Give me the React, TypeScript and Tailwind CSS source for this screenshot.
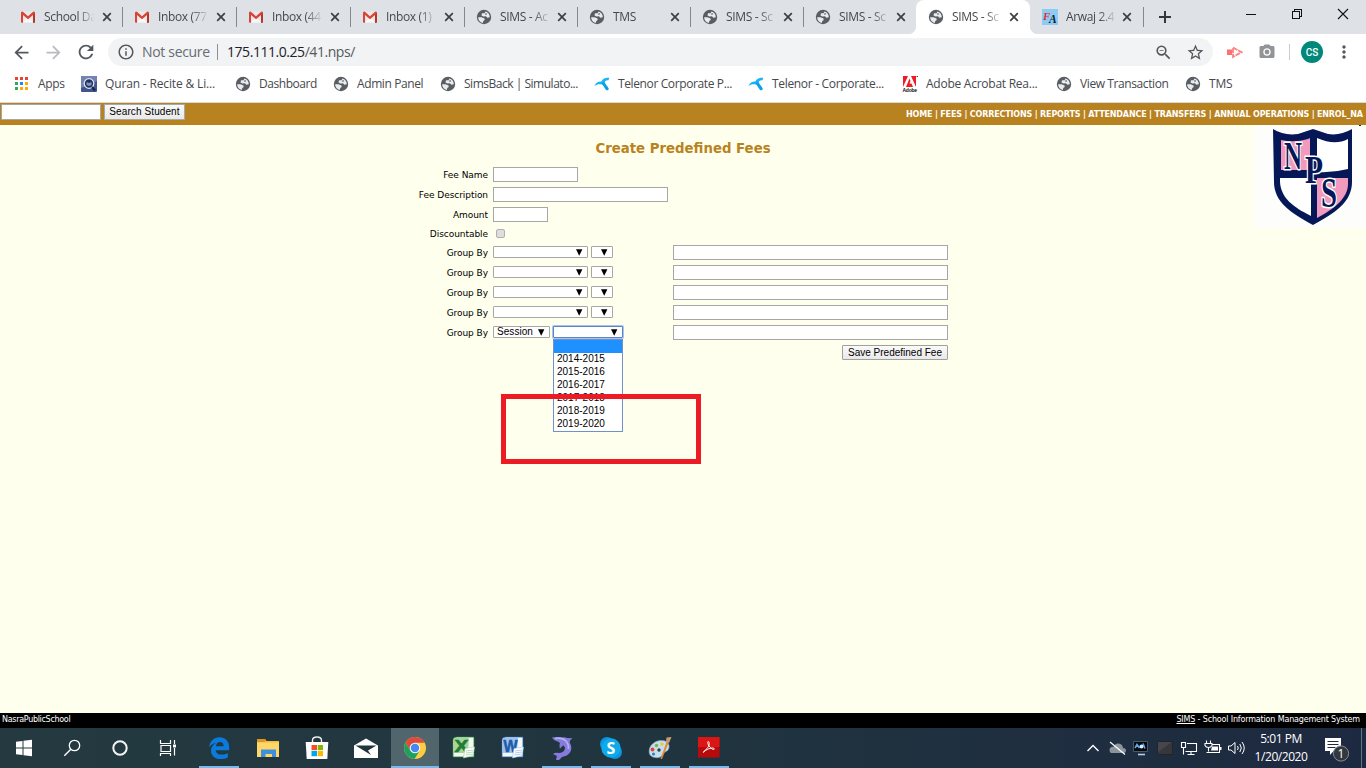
import type { ReactNode } from "react";
import {
  MdArrowBack,
  MdArrowForward,
  MdRefresh,
  MdInfoOutline,
  MdZoomOut,
  MdStarBorder,
  MdMoreVert,
  MdCameraAlt,
} from "react-icons/md";

const Gmail = () => (
  <svg width="16" height="16" viewBox="0 0 16 16">
    <rect x="1" y="2.5" width="14" height="11" rx="1" fill="#e9e9e9" />
    <path d="M3 13.5 8 8l5 5.5z" fill="#f7f7f7" />
    <path d="M1 3.5v9.3q0 .9.9.9H3V6l5 4.2L13 6v7.7h1.1q.9 0 .9-.9V3.5q-.6-1.3-1.9-.7L8 7.2 2.9 2.8Q1.6 2.2 1 3.5z" fill="#d94436" />
    <path d="M13 6v7.7h1.1q.9 0 .9-.9V4z" fill="#b8352a" />
  </svg>
);

const Globe = () => (
  <svg width="16" height="16" viewBox="0 0 16 16">
    <circle cx="8" cy="8" r="7.200" fill="#5a5e63" />
    <path d="M9.500 2.500 8.500 4.200 6 4.300 5.500 6.500 7.500 7.400 10 7.300 11.300 8.700 13.800 8.300C13.800 5.500 12 3.200 9.500 2.500z" fill="#e9ecee" />
    <path d="M2.100 8.200 5.500 8.200 8.500 9.400 8.700 10.900 7.300 12 6.800 13.900C4 13.300 2.200 11 2.100 8.200z" fill="#e9ecee" />
    <path d="m9.500 4.300 1.700.3-.8 1.200-1.400-.3z" fill="#5a5e63" />
  </svg>
);

const Telenor = () => (
  <svg width="16" height="16" viewBox="0 0 16 16">
    <path d="M.5 9.800C2 6.500 5.500 4.800 9.200 6l-.7 2.700C5.500 7.800 3 8.300.5 9.800z" fill="#19b4f8" />
    <path d="M7.200 6.500C7.500 3.500 10.500 1.200 15.300 1.700L14.500 4.300C12 4 10.800 5 10.300 7.500z" fill="#19b4f8" />
    <path d="M7.300 7.200 10.500 6c.8 2.500 3.500 4.500 4.200 6.500.4 1.800-2 2.600-3 1C10.300 11.500 9 9 7.300 7.200z" fill="#0a9fe6" />
  </svg>
);

const Adobe = () => (
  <svg width="16" height="16" viewBox="0 0 16 16">
    <path d="M1 0h13v11H1z" fill="#ed1c24" />
    <path d="M6 0h3l5 11h-3L9.500 7.500H7.500L8.500 5 7.500 2.600 4 11H1z" fill="#fff" />
    <text x="0.500" y="16" fontFamily="Liberation Sans" fontWeight="bold" fontSize="5" fill="#111">Adobe</text>
    <path d="M14.500.5h1.500" stroke="#444" />
  </svg>
);

const Apps = () => (
  <svg width="16" height="16" viewBox="0 0 16 16">
    {["#ea4335", "#ea4335", "#ea4335", "#34a853", "#1a87f5", "#fbad05", "#34a853", "#fbad05", "#fbad05"].map((c, i) => (
      <rect key={i} x={1 + (i % 3) * 5} y={1 + Math.floor(i / 3) * 5} width="3" height="3" fill={c} />
    ))}
  </svg>
);

const Quran = () => (
  <svg width="16" height="16" viewBox="0 0 16 16">
    <rect width="16" height="16" rx="1" fill="#42548c" />
    <path d="M0 0h16v5L0 12z" fill="#7382b0" />
    <circle cx="8" cy="7.500" r="4.800" fill="#20305f" stroke="#dce3f1" strokeWidth="1.300" />
    <path d="m5.500 6 2.500 1 2.500-1v3L8 10 5.500 9z" fill="#8296c0" />
    <path d="m11 11 3 3.500" stroke="#1b2142" strokeWidth="2" />
  </svg>
);

const Arwaj = () => (
  <svg width="16" height="16" viewBox="0 0 16 16">
    <rect width="16" height="16" fill="#8ccbf3" />
    <text x="1" y="10.500" fontFamily="Liberation Serif" fontStyle="italic" fontWeight="bold" fontSize="11" fill="#e0322e">F</text>
    <text x="7" y="14" fontFamily="Liberation Serif" fontStyle="italic" fontWeight="bold" fontSize="11.500" fill="#0b1a2c">A</text>
  </svg>
);

type TabData = { icon: ReactNode; text: string; cls: string; cross: string; active?: boolean; noLine?: boolean };
const tabs: TabData[] = [
  { icon: <Gmail />, text: "School Da", cls: "w-[114px]", cross: "ml-[7px]" },
  { icon: <Gmail />, text: "Inbox (77", cls: "w-[114px]", cross: "ml-[7px]" },
  { icon: <Gmail />, text: "Inbox (44", cls: "w-[114px]", cross: "ml-[7px]" },
  { icon: <Gmail />, text: "Inbox (1)", cls: "w-[114px]", cross: "ml-[7px]" },
  { icon: <Globe />, text: "SIMS - Ac", cls: "w-[113px]", cross: "ml-[6px]" },
  { icon: <Globe />, text: "TMS", cls: "w-[113px]", cross: "ml-[6px]" },
  { icon: <Globe />, text: "SIMS - Sc", cls: "w-[113px]", cross: "ml-[6px]" },
  { icon: <Globe />, text: "SIMS - Sc", cls: "w-[113px]", cross: "ml-[6px]", noLine: true },
  { icon: <Globe />, text: "SIMS - Sc", cls: "w-[114px]", cross: "ml-[6px]", active: true },
  { icon: <Arwaj />, text: "Arwaj 2.4", cls: "w-[113px]", cross: "ml-[5px]" },
];

const Cross = () => (
  <svg width="10" height="10" viewBox="0 0 10 10" className="shrink-0">
    <path d="m1.200 1.200 7.600 7.600m0-7.600L1.200 8.800" stroke="#3c4043" strokeWidth="1.700" />
  </svg>
);

function Tab({ tab }: { tab: TabData }) {
  return (
    <div className={`relative flex h-[34px] shrink-0 items-center pl-[12px] ${tab.cls} ${tab.active ? "rounded-t-lg bg-white" : ""}`}>
      {tab.active && (
        <>
          <span className="absolute bottom-0 -left-2 size-2 bg-[radial-gradient(circle_at_0_0,#dee1e6_8px,#fff_8.5px)]" />
          <span className="absolute -right-2 bottom-0 size-2 bg-[radial-gradient(circle_at_100%_0,#dee1e6_8px,#fff_8.5px)]" />
        </>
      )}
      <span className="w-6 shrink-0">{tab.icon}</span>
      <span className="w-[51px] overflow-hidden text-[12px] tracking-[-0.35px] whitespace-nowrap text-[#45494d] [mask-image:linear-gradient(to_right,black_65%,transparent)]">
        {tab.text}
      </span>
      <span className={tab.cross}><Cross /></span>
      {!tab.active && !tab.noLine && <span className="absolute top-[7px] right-0 -mr-px h-5 w-px bg-[#85888d]" />}
    </div>
  );
}

const bookmarks = [
  { icon: <Apps />, text: "Apps", cls: "w-[67px] tracking-[-0.3px]" },
  { icon: <Quran />, text: "Quran - Recite & Li...", cls: "w-[154px] tracking-[-0.15px]" },
  { icon: <Globe />, text: "Dashboard", cls: "w-[98px] tracking-[-0.45px]" },
  { icon: <Globe />, text: "Admin Panel", cls: "w-[107px] tracking-[-0.4px]" },
  { icon: <Globe />, text: "SimsBack | Simulato...", cls: "w-[154px] tracking-[-0.48px]" },
  { icon: <Telenor />, text: "Telenor Corporate P...", cls: "w-[154px] tracking-[-0.38px]" },
  { icon: <Telenor />, text: "Telenor - Corporate...", cls: "w-[154px] tracking-[-0.32px]" },
  { icon: <Adobe />, text: "Adobe Acrobat Rea...", cls: "w-[154px] tracking-[-0.25px]" },
  { icon: <Globe />, text: "View Transaction", cls: "w-[129px] tracking-[-0.4px]" },
  { icon: <Globe />, text: "TMS", cls: "w-[60px] tracking-[-0.2px]" },
];

function Browser() {
  return (
    <header className="h-[103px] border-b border-[#d5dadb] bg-white font-['Open_Sans',sans-serif]">
      <div className="flex h-[34px] items-center bg-[#dee1e6] pl-2">
        {tabs.map((t, i) => <Tab key={i} tab={t} />)}
        <svg width="14" height="14" viewBox="0 0 14 14" className="ml-[15px]">
          <path d="M7 1v12M1 7h12" stroke="#33373b" strokeWidth="2" />
        </svg>
        <svg width="110" height="14" viewBox="0 0 110 14" className="mt-[-6px] ml-[74px]" fill="none" stroke="#111" shapeRendering="crispEdges">
          <path d="M0 7.500h10" />
          <path d="M46.500 4.500h7v7h-7zM48.500 4V2.500h7v7H54" />
          <path d="m92 2 10 10m0-10L92 12" shapeRendering="auto" strokeWidth="1.100" />
        </svg>
      </div>
      <div className="flex h-9 items-center pl-[11px] text-[#54585c]">
        <MdArrowBack size={21} />
        <MdArrowForward size={21} className="ml-[11px] text-[#b9bbbe]" />
        <MdRefresh size={22} className="ml-[11px]" />
        <div className="ml-[11px] flex h-7 w-[1105px] items-center rounded-full bg-[#f1f3f4] pl-[9px] text-[14px]">
          <MdInfoOutline size={18} />
          <span className="-mt-px ml-[7px] w-[68px] tracking-[-0.32px] whitespace-nowrap text-[#686c70]">Not secure</span>
          <span className="ml-[7px] h-4 w-px bg-[#8b8f93]" />
          <span className="-mt-px ml-[9px] tracking-[-0.45px] text-[#202124]">175.111.0.25<span className="text-[#55595d]">/41.nps/</span></span>
          <MdZoomOut size={19} className="mr-[13px] ml-auto" />
          <MdStarBorder size={19} className="mr-[8px]" />
        </div>
        <svg width="16" height="14" viewBox="0 0 16 14" className="ml-[14px]">
          <path d="M0 4.500h5v5.500H0z" fill="#ff7070" />
          <path d="M6 2.500 14.500 7.200 6 12z" fill="none" stroke="#ff8080" strokeWidth="1.800" strokeDasharray="5 .8" />
        </svg>
        <MdCameraAlt size={18} className="ml-[15px] text-[#929496]" />
        <span className="ml-[13px] h-4 w-px bg-[#c9ccd0]" />
        <span className="ml-[11px] flex size-[22px] items-center justify-center rounded-full bg-[#00897b] font-['Roboto',sans-serif] text-[10px] font-medium text-white">CS</span>
        <MdMoreVert size={20} className="ml-[11px]" />
      </div>
      <nav className="flex h-8 items-center pb-[4px] pl-[14px] text-[12px] whitespace-nowrap text-[#45494d]">
        {bookmarks.map((b, i) => (
          <div key={i} className={`flex shrink-0 items-center ${b.cls}`}>
            <span className="w-6 shrink-0">{b.icon}</span>
            <span className="-mt-px">{b.text}</span>
          </div>
        ))}
      </nav>
    </header>
  );
}

const menu = ["HOME", "FEES", "CORRECTIONS", "REPORTS", "ATTENDANCE", "TRANSFERS", "ANNUAL OPERATIONS", "ENROL_NA"];

const Arrow = () => (
  <svg width="7" height="7" viewBox="0 0 7 7" className="shrink-0">
    <path d="M0 .3h6.400L3.200 6.700z" fill="#000" />
  </svg>
);

function Select({ cls, children }: { cls: string; children?: ReactNode }) {
  return (
    <div className={`flex h-3 items-center justify-between rounded-[1px] border bg-white pl-[3px] font-['Liberation_Sans',sans-serif] text-[10px] leading-[10px] tracking-[0.05px] ${cls}`}>
      <span>{children}</span>
      <Arrow />
    </div>
  );
}

const Field = ({ cls }: { cls: string }) => <div className={`h-[15px] border border-[#a7a7a7] bg-white ${cls}`} />;

function Row({ label, cls, children }: { label: string; cls: string; children: ReactNode }) {
  return (
    <div className={`flex items-center ${cls}`}>
      <span className="mr-[5px] w-20 text-right text-[9px] leading-3 tracking-[-0.05px] whitespace-nowrap">{label}</span>
      {children}
    </div>
  );
}

const sessions = ["2014-2015", "2015-2016", "2016-2017", "2017-2018", "2018-2019", "2019-2020"];

function Shield() {
  return (
    <svg width="112" height="103" viewBox="0 0 112 103">
      <rect width="112" height="103" fill="#fdfefc" />
      <path d="M19 4q11 7 25 5l15-5 15 5q12 2 24-5v53c0 20-17 31-39 43C37 88 20 77 20 57z" fill="#061758" />
      <path d="M27 15q14 3 27-1l2-1v32H27z" fill="#f19abe" />
      <path d="M63 13q18 8 31 1v30q-15 4-31 3z" fill="#fff" />
      <path d="M26 53h31v38C39 82 27 73 26 57z" fill="#fff" />
      <path d="M63 53h31v6c0 14-14 25-31 34z" fill="#f19abe" />
      <g fontFamily="Liberation Serif" fontWeight="bold" fill="#061758" stroke="#fff" strokeWidth="3" paintOrder="stroke">
        <text x="30" y="44" fontSize="41" textLength="18" lengthAdjust="spacingAndGlyphs">N</text>
        <text x="51" y="58" fontSize="41" textLength="18" lengthAdjust="spacingAndGlyphs">P</text>
        <text x="67" y="82" fontSize="42" textLength="16" lengthAdjust="spacingAndGlyphs">S</text>
      </g>
      <path d="M105 0h2v1h-2z" fill="#222" />
    </svg>
  );
}

function Page() {
  return (
    <main className="font-['DejaVu_Sans',sans-serif] text-black">
      <div className="flex h-[22px] items-start bg-[#b98221] pr-[3px] pl-px">
        <div className="mt-px h-4 w-[100px] border border-[#a7a7a7] bg-white" />
        <button className="mt-px ml-[3px] h-4 w-[81px] border border-[#a9a9a9] bg-gradient-to-b from-[#fafafa] to-[#e9e9e9] font-['Liberation_Sans',sans-serif] text-[10px] leading-[14px] tracking-[0.1px] whitespace-nowrap">Search Student</button>
        <div className="mt-[7px] ml-auto flex w-[457px] justify-between text-[8px] leading-[10px] font-bold tracking-[-0.15px] whitespace-nowrap text-white">
          {menu.flatMap((m, i) => (i ? [<span key={`s${i}`}>|</span>, <span key={m}>{m}</span>] : [<span key={m}>{m}</span>]))}
        </div>
      </div>
      <div className="grid h-[588px] grid-cols-[408px_550px_1fr] bg-[#ffffee]">
        <form className="col-start-2 pt-[15px]">
          <h1 className="text-center text-[13.3px] leading-[18px] font-bold whitespace-nowrap text-[#b98221]">Create Predefined Fees</h1>
          <Row label="Fee Name" cls="mt-[9px] h-[15px]"><Field cls="w-[85px]" /></Row>
          <Row label="Fee Description" cls="mt-[5px] h-[15px]"><Field cls="w-[175px]" /></Row>
          <Row label="Amount" cls="mt-[5px] h-[15px]"><Field cls="w-[55px]" /></Row>
          <Row label="Discountable" cls="mt-[4px] h-[15px]">
            <span className="ml-[3px] size-[9px] rounded-[2px] border border-[#b0b0b0] bg-[#dedede]" />
          </Row>
          <div className="mt-[4px] flex flex-col gap-[5px]">
            {[0, 1, 2, 3].map((i) => (
              <Row key={i} label="Group By" cls="h-[15px]">
                <Select cls="mb-px w-[95px] border-[#a7a7a7] pr-[4px]" />
                <Select cls="mb-px ml-[3px] w-[22px] border-[#a7a7a7] pr-[4px]" />
                <Field cls="ml-[60px] w-[275px]" />
              </Row>
            ))}
            <Row label="Group By" cls="h-[15px]">
              <Select cls="mb-px w-[57px] border-[#a7a7a7] pr-[4px] pl-[2px]">Session</Select>
              <div className="relative mb-px ml-[3px] w-[70px]">
                <Select cls="border-[#5c83c4] pr-[4px] ring-1 ring-[#a9c4ee]" />
                <div className="absolute top-[13px] left-0 h-[93px] w-[70px] border border-[#6f92cd] bg-white">
                  <div className="h-[13px] bg-[#1e90ff]" />
                  {sessions.map((s) => (
                    <div key={s} className="h-[13px] pl-[3px] font-['Liberation_Sans',sans-serif] text-[10px] leading-[12px]">{s}</div>
                  ))}
                </div>
                <div className="absolute top-[68px] -left-[52px] h-[70px] w-[200px] border-[5px] border-[#ed1c24]" />
              </div>
              <Field cls="ml-[50px] w-[275px]" />
            </Row>
          </div>
          <button className="mt-[5px] ml-[434px] block h-[15px] w-[106px] rounded-[1px] border border-[#a0a0a0] bg-gradient-to-b from-[#fafafa] to-[#e9e9e9] font-['Liberation_Sans',sans-serif] text-[10px] leading-[13px] whitespace-nowrap">Save Predefined Fee</button>
        </form>
        <div className="justify-self-end"><Shield /></div>
      </div>
      <footer className="flex h-[15px] justify-between bg-black pt-px pr-[6px] pl-[2px] text-[8px] leading-[12px] tracking-[-0.16px] text-white">
        <span className="tracking-[-0.3px]">NasraPublicSchool</span>
        <span><u>SIMS</u> - School Information Management System</span>
      </footer>
    </main>
  );
}

const Ico = ({ children }: { children: ReactNode }) => (
  <svg width="24" height="24" viewBox="0 0 24 24" fill="none">{children}</svg>
);

const Start = () => <Ico><path d="M4 5.800 10.500 5v6.500H4zM11.500 4.800 20 3.700v7.800h-8.500zM4 12.500h6.500V19L4 18.200zM11.500 12.500H20v7.800l-8.500-1.100z" fill="#fff" /></Ico>;
const Search = () => <Ico><circle cx="14.500" cy="9.500" r="5.200" stroke="#fff" strokeWidth="1.300" /><path d="m10.800 13.200-6.500 6.600" stroke="#fff" strokeWidth="1.400" /></Ico>;
const Cortana = () => <Ico><circle cx="12" cy="12" r="6.700" stroke="#f4f4f4" strokeWidth="2" /></Ico>;
const TaskView = () => (
  <Ico>
    <path d="M4.500 4v3.500h10V4M5 9.500h9.500v6H5zM4.500 20v-2.500h10V20M18.500 4v4M18.500 12v7.500" stroke="#fff" strokeWidth="1.200" />
    <path d="M17 8.500h3v3h-3z" fill="#fff" />
  </Ico>
);
const Edge = () => (
  <Ico><path d="M2 11.200C3 4.500 7.500 1.200 12.500 1.200c6.200 0 9.700 4.500 9.700 10v3H8.700c.3 3.300 3 4.400 6 4.400 2.300 0 4.300-.7 6.100-1.700v4.500c-2.200 1.100-4.500 1.600-7.200 1.600C7.800 23 4 19.500 4 14.700c0-3.200 1.800-6.200 5-7.700-3 .5-5.500 2-7 4.200zM8.900 10.200h7.700c0-2.700-1.200-4.200-3.600-4.200-2.300 0-3.700 1.600-4.100 4.200z" fill="#0a7bdc" /></Ico>
);
const Folder = () => (
  <Ico>
    <path d="M1 3h8l1.500 2H23v16H1z" fill="#f4bd3d" /><path d="M1 3h8l1 1.700L8.500 6H1z" fill="#dc9722" /><path d="M1 6.500h22V21H1z" fill="#ffd768" />
    <path d="M5 21v-7.500h15V21h-4v-3H9.500v3z" fill="#3e8fdc" />
  </Ico>
);
const Store = () => (
  <Ico>
    <path d="M7.500 7V4.500Q7.500 1 12 1t4.500 3.500V7" stroke="#eee" strokeWidth="1.400" /><path d="M.7 6h22.600l-1 17H1.700z" fill="#fff" />
    <path d="M6.500 9H12v5.200H6.500z" fill="#f25022" /><path d="M12.700 9H18v5.200h-5.300z" fill="#7fba00" /><path d="M6.500 15H12v5.200H6.500z" fill="#00a4ef" /><path d="M12.700 15H18v5.200h-5.300z" fill="#ffb900" />
  </Ico>
);
const Mail = () => <Ico><path d="M0 9.500 12 2.500l12 7V22H0z" fill="#fff" /><path d="M1.500 9.500h21L14 14.500l3 4.500z" fill="#22353e" /></Ico>;
const Chrome = () => (
  <Ico>
    <circle cx="12" cy="12" r="11" fill="#ffcd40" />
    <path d="M2.500 6.500A11 11 0 0 1 21.600 6.800H12L7.300 14.500z" fill="#dd4b3e" />
    <path d="M2.500 6.500A11 11 0 0 0 11.500 23l5.200-8.200L12 17l-4.700-2.500z" fill="#1ba260" />
    <circle cx="12" cy="12" r="5.300" fill="#f4f4f4" /><circle cx="12" cy="12" r="4.200" fill="#4688f4" />
  </Ico>
);
const Office = ({ letter, color, light }: { letter: string; color: string; light: string }) => (
  <Ico>
    <path d="M1 4q0-3 4-3h17v20H1z" fill="#f3f8f3" stroke={color} strokeWidth=".8" />
    <path d="M1.500 4q0-2.500 4-2.500H17L16 17H1.500z" fill={light} />
    <text x="2.500" y="16" fontFamily="Liberation Sans" fontWeight="bold" fontSize="17" fill={color} stroke={color} strokeWidth=".6" textLength="14" lengthAdjust="spacingAndGlyphs">{letter}</text>
    <path d="m13 12.500 9.500-1.500L21 19.500 11.500 22z" fill="#fff" stroke={light} strokeWidth=".6" />
    <path d="m14 15 7-1M14 17l7-1M13.500 19l7-1" stroke={color} strokeWidth=".6" opacity=".5" />
  </Ico>
);
const Dolphin = () => (
  <Ico>
    <path d="M2 1.500Q7 .5 12 1.500q3-.5 5 .5l5.500.3L20 4.500q.5 1.500-.5 1.500 3.500 6 .5 10.500-2.500 3.500-8 4.500l-3 3q-2.500.5-3-.5l1-3.500-4-2q2-2 6.500-1 5-.5 5.500-5-.5-2.500-2-2.500l-3 3q-1-3 0-5.500Q8 5 5 4.500 3 3.500 2 1.500z" fill="#867bdc" />
    <path d="M5 2.500q7-1.500 11 2.500 3 3.500 2.500 8" stroke="#b4b1f2" strokeWidth="1.600" />
  </Ico>
);
const Skype = () => (
  <Ico>
    <circle cx="8" cy="8" r="7" fill="#0c94de" /><circle cx="16" cy="16" r="7" fill="#0c94de" /><circle cx="12" cy="12" r="9.700" fill="#0eaaea" />
    <text x="12" y="18" textAnchor="middle" fontFamily="Open Sans" fontWeight="bold" fontSize="16" fill="#fff">S</text>
  </Ico>
);
const Paint = () => (
  <Ico>
    <path d="M2 19C-1 13 4 5.500 12 4.500q8-.5 9 5c.6 5-3 6-5 7s-1 4-5 5q-6 1-9-2.500z" fill="#c5dfed" stroke="#80aabe" strokeWidth=".6" />
    <circle cx="4.500" cy="13.500" r="1.900" fill="#e04438" /><circle cx="8.500" cy="9.500" r="1.800" fill="#7ab83c" /><circle cx="14" cy="8" r="1.700" fill="#f1c534" /><circle cx="11" cy="14" r="1.700" fill="#294352" /><circle cx="5.500" cy="18" r="1.500" fill="#2b80c9" />
    <path d="m12.500 23 6-17 2 1-6.500 16z" fill="#e6892c" /><path d="m18 6 .5-4.500 5-.5-2.500 6z" fill="#c99c72" />
  </Ico>
);
const Acrobat = () => (
  <Ico>
    <rect x="1" y="1" width="21.500" height="20.500" fill="#b90a0b" /><path d="M1 1h21.500v10H1z" fill="#dc1515" />
    <path d="M6.500 16.500c-1.500-1 4.500-3 5.500-7.500.6-2.500-.2-3.500-.8-3.500-1.300 0 0 5.500 4.300 7.700 1.700.8 2.500-.4 1.200-1-1.700-.8-8 1-10.200 4.300z" stroke="#fff" strokeWidth="1" />
  </Ico>
);

const apps = [
  { icon: <Edge />, state: "open" },
  { icon: <Folder />, state: "" },
  { icon: <Store />, state: "" },
  { icon: <Mail />, state: "" },
  { icon: <Chrome />, state: "active" },
  { icon: <Office letter="X" color="#217c35" light="#a8d59c" />, state: "" },
  { icon: <Office letter="W" color="#1d5bab" light="#9fc4ec" />, state: "" },
  { icon: <Dolphin />, state: "open" },
  { icon: <Skype />, state: "open" },
  { icon: <Paint />, state: "open" },
  { icon: <Acrobat />, state: "open" },
];

function Tray() {
  return (
    <svg width="168" height="24" viewBox="0 0 168 24" fill="none" stroke="#fff" className="mr-px">
      <path d="m5.500 15 5.500-5.500 5.500 5.500" strokeWidth="1.400" />
      <path d="M29 17h13q2-.3 2-2.500T41 12q-.5-4.500-5-4.500-3 0-4 3-4 0-4.500 3 0 3 1.500 3.500z" fill="#8d959c" stroke="none" />
      <path d="m28 6 15 12.500" strokeWidth="1.200" />
      <path d="M51.500 5.500h14v10h-14z" fill="#05080d" stroke="#4b5866" />
      <path d="m53 12 2-3.500L57.500 12M61 7.500l2 5" stroke="#58a8f5" strokeWidth="1.600" /><path d="M56 18.500h7" stroke="#acd2f0" strokeWidth="1.600" /><circle cx="59.500" cy="10.500" r="2" fill="#d8ecff" stroke="none" />
      <path d="M75.500 5.500h15v13h-15z" fill="#35373b" stroke="#222428" /><path d="M76 6h14L76 16z" fill="#45474a" stroke="none" />
      <path d="M99.500 6.500h4v5h-4zM101.500 11.500v7M105 7.500h9.500v8h-11M109 15.500v3M105.500 18.500h7" strokeWidth="1.100" />
      <path d="M124.500 4.500v3M128.500 4.500v3M123 7.500h7v2q-1 2-3.500 2T123 9.500zM126.500 12v3.500M130 8.500h7.500v8h-13" strokeWidth="1.100" /><path d="M130 10.500h6v4h-7zM138 11h1.500v3H138z" fill="#fff" stroke="none" />
      <path d="M146.500 10h2.500l4-3.500v11l-4-3.500h-2.500z" /><path d="M155.500 10q1.500 2 0 4M157.800 8q3 4 0 8M160 6q4.500 6 0 12" />
    </svg>
  );
}

function Taskbar() {
  return (
    <footer className="flex h-10 bg-gradient-to-r from-[#243a40] via-[#20343f] to-[#1d2940] text-white">
      {[<Start />, <Search />, <Cortana />, <TaskView />].map((icon, i) => (
        <div key={i} className="flex w-12 items-center justify-center">{icon}</div>
      ))}
      <div className="ml-[3px] flex gap-px">
        {apps.map((a, i) => (
          <div key={i} className={`flex w-12 flex-col items-center pt-2 ${a.state === "active" ? "bg-[#51656c]" : ""}`}>
            {a.icon}
            {a.state && <span className={`mt-auto h-[2px] bg-[#76b9ed] ${a.state === "active" ? "w-12" : "w-10"}`} />}
          </div>
        ))}
      </div>
      <div className="ml-auto flex items-center">
        <Tray />
        <div className="w-[60px] text-center font-['Open_Sans',sans-serif] text-[12px] leading-[18px] tracking-[-0.45px] whitespace-nowrap">
          <div>5:01 PM</div>
          <div>1/20/2020</div>
        </div>
        <svg width="28" height="28" viewBox="0 0 28 28" className="ml-[13px]">
          <path d="M1 4h16v13H9.500L6 21v-4H1z" fill="#fff" />
          <path d="M3.500 7.500h11M3.500 10.500h11M3.500 13.500h8" stroke="#1f2c3e" />
          <circle cx="17" cy="19.500" r="7.600" fill="#33383f" stroke="#888d92" />
          <text x="17" y="24" textAnchor="middle" fontFamily="Open Sans" fontSize="12" fill="#fff">1</text>
        </svg>
        <span className="mr-1 ml-[9px] h-10 w-px bg-[#667381]" />
      </div>
    </footer>
  );
}

export default function App() {
  return (
    <div className="h-[768px] w-[1366px] overflow-hidden">
      <Browser />
      <Page />
      <Taskbar />
    </div>
  );
}
